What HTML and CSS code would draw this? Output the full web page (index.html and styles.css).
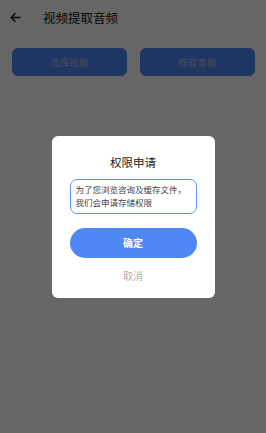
FILE: index.html
```html
<!DOCTYPE html>
<html lang="zh-CN">
<head>
    <meta charset="UTF-8">
    <meta name="viewport" content="width=device-width, initial-scale=1.0">
    <title>视频提取音频</title>
    <link rel="stylesheet" href="styles.css">
</head>
<body>
    <div class="header">
        <span class="back">
            <svg width="11" height="11" viewBox="0 0 11 11">
                <path d="M10.5 5.5H1.2M5.5 1.2L1.2 5.5L5.5 9.8" fill="none" stroke="#111" stroke-width="1.3"/>
            </svg>
        </span>
        <span class="title">视频提取音频</span>
    </div>

    <div class="actions">
        <button class="btn">选择视频</button>
        <button class="btn">提取音频</button>
    </div>

    <!-- Permission dialog over a dimmed page -->
    <div class="mask">
        <div class="dialog">
            <h2>权限申请</h2>
            <div class="notice">为了您浏览咨询及缓存文件，我们会申请存储权限</div>
            <button class="confirm">确定</button>
            <div class="cancel">取消</div>
        </div>
    </div>
</body>
</html>
```

FILE: styles.css
```css
/* Basic reset */
* {
    margin: 0;
    padding: 0;
    box-sizing: border-box;
}

body {
    font-family: "Noto Sans CJK SC", "Noto Sans", sans-serif;
    background-color: #fff;
    width: 266px;
    height: 433px;
    overflow: hidden;
}

/* Header */
.header {
    display: flex;
    align-items: center;
    height: 35px;
    padding-left: 10px;
}

.header .back {
    display: flex;
    width: 33px;
}

.header .title {
    font-size: 12.5px;
    color: #111;
}

/* Top buttons */
.actions {
    display: flex;
    justify-content: space-between;
    padding: 13px 11px 0 12px;
}

.btn {
    width: 115px;
    height: 28px;
    border: none;
    border-radius: 6px;
    background-color: #4f88f5;
    color: #b4c4e0;
    font-family: inherit;
    font-size: 9px;
    letter-spacing: 0.5px;
}

/* Dim layer and dialog */
.mask {
    position: fixed;
    top: 0;
    left: 0;
    width: 100%;
    height: 100%;
    background-color: rgba(0, 0, 0, 0.6);
    display: flex;
    justify-content: center;
    align-items: center;
}

.dialog {
    width: 163px;
    height: 162px;
    background-color: #fff;
    border-radius: 6px;
    padding: 17px 18px 0 18px;
    display: flex;
    flex-direction: column;
    align-items: center;
}

.dialog h2 {
    font-size: 11.5px;
    font-weight: normal;
    color: #222;
    line-height: 18px;
    margin-bottom: 8px;
}

.notice {
    width: 100%;
    height: 35px;
    border: 1.5px solid #6094f3;
    border-radius: 7px;
    padding: 3px 5px;
    font-size: 8.5px;
    line-height: 13px;
    color: #444;
}

.confirm {
    width: 100%;
    height: 30px;
    margin-top: 14px;
    border: none;
    border-radius: 15px;
    background-color: #4f88f5;
    color: #fff;
    font-family: inherit;
    font-size: 10px;
    font-weight: bold;
}

.cancel {
    margin-top: 10px;
    font-size: 10px;
    color: #b0b0b0;
}
```
